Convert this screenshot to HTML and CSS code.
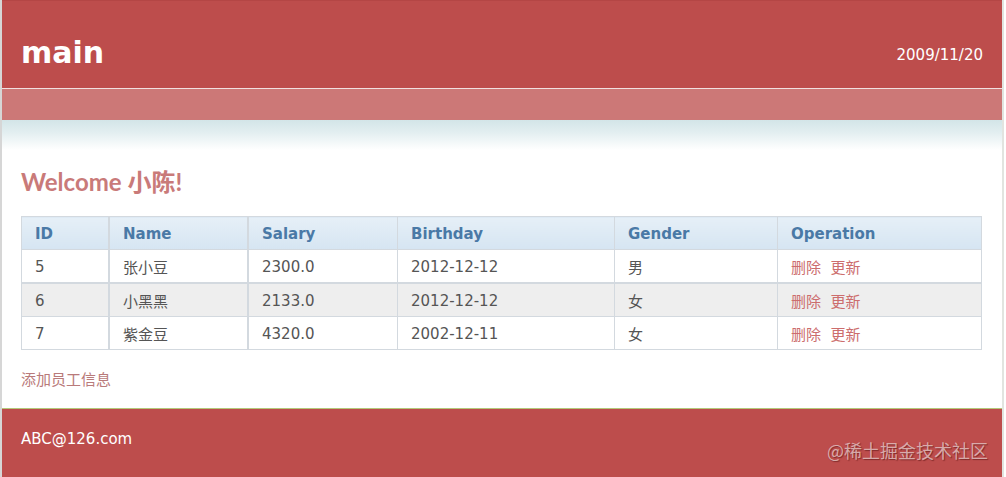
FILE: index.html
```html
<!DOCTYPE html>
<html lang="zh-CN">
<head>
    <meta charset="UTF-8">
    <title>main</title>
    <link rel="stylesheet" href="styles.css">
</head>
<body>
    <div class="page">
        <div class="header">
            <h1 class="logo">main</h1>
            <span class="date">2009/11/20</span>
        </div>
        <div class="navbar"></div>
        <div class="fade"></div>

        <div class="content">
            <h2 class="welcome">Welcome 小陈!</h2>
            <table class="grid">
                <tr class="head">
                    <th class="c-id">ID</th>
                    <th class="c-name">Name</th>
                    <th class="c-salary">Salary</th>
                    <th class="c-birth">Birthday</th>
                    <th class="c-gender">Gender</th>
                    <th class="c-op">Operation</th>
                </tr>
                <tr>
                    <td>5</td>
                    <td>张小豆</td>
                    <td>2300.0</td>
                    <td>2012-12-12</td>
                    <td>男</td>
                    <td><a href="#">删除</a>&nbsp;&nbsp;<a href="#">更新</a></td>
                </tr>
                <tr class="alt">
                    <td>6</td>
                    <td>小黑黑</td>
                    <td>2133.0</td>
                    <td>2012-12-12</td>
                    <td>女</td>
                    <td><a href="#">删除</a>&nbsp;&nbsp;<a href="#">更新</a></td>
                </tr>
                <tr>
                    <td>7</td>
                    <td>紫金豆</td>
                    <td>4320.0</td>
                    <td>2002-12-11</td>
                    <td>女</td>
                    <td><a href="#">删除</a>&nbsp;&nbsp;<a href="#">更新</a></td>
                </tr>
            </table>
            <a class="add" href="#">添加员工信息</a>
        </div>

        <div class="footer">
            ABC@126.com
            <span class="watermark">@稀土掘金技术社区</span>
        </div>
    </div>
</body>
</html>
```

FILE: styles.css
```css
body {
    margin: 0;
    background-color: #fff;
    font-family: "DejaVu Sans", Verdana, "Noto Sans CJK SC", sans-serif;
    font-size: 15px;
    color: #555;
}

.page {
    width: 1000px;
    border-left: 2px solid #d6d6d6;
    border-right: 2px solid #e2e4e0;
}

.header {
    height: 71px;
    border-top: 1px solid #b44645;
    background-color: #bd4d4c;
    border-bottom: 1px solid #f2e0e0;
    display: flex;
    align-items: center;
    justify-content: space-between;
    padding: 16px 19px 0;
}

.logo {
    margin: 0;
    font-size: 30px;
    font-weight: bold;
    color: #fff;
}

.date {
    color: #fff;
    font-size: 15px;
    position: relative;
    top: 2px;
}

.navbar {
    height: 31px;
    background-color: #cc7877;
}

.fade {
    height: 30px;
    background: linear-gradient(#d3e5e8, #e2eef0 40%, #fff);
}

.content {
    padding: 0 19px;
    overflow: hidden;
}

.welcome {
    margin: 17px 0 19px;
    font-family: Lato, "Noto Sans CJK SC", sans-serif;
    font-size: 24px;
    line-height: 30px;
    font-weight: bold;
    color: #c97a79;
}

.grid {
    width: 961px;
    border-collapse: collapse;
    table-layout: fixed;
}

.grid th,
.grid td {
    border: 1px solid #d3d9df;
    height: 31px;
    padding: 1px 13px 0;
    text-align: left;
    font-size: 15px;
}

.grid th {
    background: linear-gradient(#e6eff7, #d6e5f2);
    color: #4a79a6;
    font-weight: bold;
}

.grid .c-id { width: 60px; }
.grid .c-name { width: 111px; border-left-width: 2px; }
.grid .c-salary { width: 122px; border-left-width: 2px; }
.grid .c-birth { width: 190px; }
.grid .c-gender { width: 136px; }

.grid tr td:nth-child(2),
.grid tr td:nth-child(3) {
    border-left-width: 2px;
}

.grid .alt td {
    background-color: #eeeeee;
    border-top: 2px solid #d3d9df;
}

.grid a {
    color: #cc6d6d;
    text-decoration: none;
}

.add {
    display: inline-block;
    margin: 20px 0 18px;
    line-height: 20px;
    color: #b97a7a;
    text-decoration: none;
}

.footer {
    position: relative;
    height: 48px;
    border-top: 1px solid #b4c87a;
    background-color: #bd4d4c;
    padding: 20px 19px 0;
    line-height: 20px;
    color: #fff;
}

.watermark {
    position: absolute;
    right: 14px;
    bottom: 16px;
    font-family: "Noto Sans CJK SC", sans-serif;
    font-size: 18px;
    line-height: 22px;
    color: rgba(225, 190, 190, 0.85);
    text-shadow: 1px 1px 1px rgba(90, 20, 20, 0.6);
}
```
